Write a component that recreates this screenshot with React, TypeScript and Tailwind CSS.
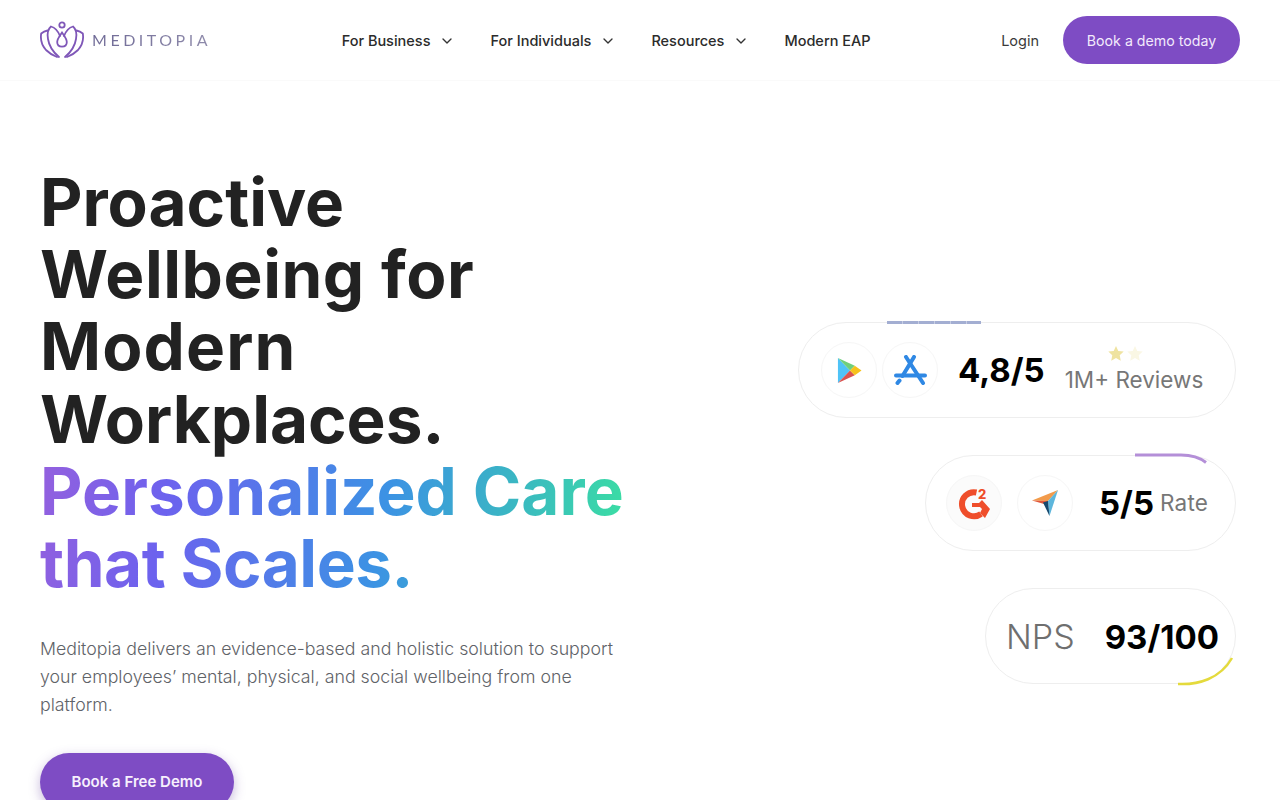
import { ChevronDown } from 'lucide-react';

const NAV_ITEMS = [
  { label: 'For Business', caret: true },
  { label: 'For Individuals', caret: true },
  { label: 'Resources', caret: true },
  { label: 'Modern EAP', caret: false },
];

function Logo() {
  return (
    <div className="flex items-center gap-[8px]">
      <svg width="44" height="38" viewBox="0 0 44 38" fill="none" stroke="#7f57b8" strokeWidth="1.8" strokeLinecap="round">
        <circle cx="22" cy="4" r="2.700" />
        <path d="M22 11.500c-2 3-4.800 6.200-4.800 9.500 0 3 2 4.700 4.800 4.700s4.800-1.700 4.800-4.700c0-3.300-2.800-6.500-4.800-9.500z" />
        <path d="M20 15C18 10 15 6.500 11 5.500 8 8 7 12.500 8 18c1 7 5 13 11 18" />
        <path d="M24 15c2-5 5-8.500 9-9.500 3 2.500 4 7 3 12.500-1 7-5 13-11 18" />
        <path d="M7.500 9.500C5 10 3 11 1.200 12.500c-1 6 .8 12 4.800 16.500 3 3 7 5.500 11 7" />
        <path d="M36.500 9.500c2.500.5 4.500 1.500 6.300 3 1 6-.8 12-4.800 16.500-3 3-7 5.500-11 7" />
      </svg>
      <span className="bg-gradient-to-r from-[#6f6a96] to-[#8f8bab] bg-clip-text font-['Lato',sans-serif] text-[16px] leading-none tracking-[0.22em] text-transparent">
        MEDITOPIA
      </span>
    </div>
  );
}

function Header() {
  return (
    <header className="flex h-[81px] items-center justify-between border-b border-[#fafafa] px-10">
      <Logo />
      <nav className="mt-[2px] flex items-center gap-[35px]">
        {NAV_ITEMS.map((item) => (
          <a key={item.label} className="flex items-center gap-[9px] text-[14.5px] font-medium text-[#2b2b2b]">
            {item.label}
            {item.caret && <ChevronDown size={16} strokeWidth={2} className="text-[#333333]" />}
          </a>
        ))}
      </nav>
      <div className="flex items-center gap-[24px]">
        <a className="mt-[2px] text-[14.5px] text-[#3a3a3a]">Login</a>
        <a className="flex h-12 w-[177px] items-center justify-center rounded-full bg-[#7e4cc4] pt-[2px] text-[14.2px] text-[#f3eafc]">
          Book a demo today
        </a>
      </div>
    </header>
  );
}

function IconCircle({ children, tinted }: { children: React.ReactNode; tinted?: boolean }) {
  return (
    <div className={`flex h-14 w-14 items-center justify-center rounded-full border border-[#f6f6f6] ${tinted ? 'bg-[#fbfbfb]' : 'bg-white'}`}>
      {children}
    </div>
  );
}

function GooglePlayIcon() {
  return (
    <svg width="25" height="27" viewBox="0 0 26 28">
      <path d="M1 1v26l12.500-13z" fill="#4fc3f7" />
      <path d="M1 1l12.500 13 5-5z" fill="#6fcf7c" />
      <path d="M1 27l12.500-13 5 5z" fill="#d9534f" />
      <path d="M18.500 9L13.500 14l5 5 7-5z" fill="#f6c21c" />
    </svg>
  );
}

function AppStoreIcon() {
  return (
    <svg width="33" height="30" viewBox="0 0 33 30" fill="none" stroke="#2f88e4" strokeWidth="4" strokeLinecap="round">
      <path d="M12 2l17 26" />
      <path d="M20 2L8.500 21" />
      <path d="M5.500 25.500L3.500 28" />
      <path d="M2 20.500h29" />
    </svg>
  );
}

function G2Icon() {
  return (
    <svg width="34" height="34" viewBox="0 -2 34 34">
      <path d="M19.500 4.500A12 12 0 1 0 24 26" fill="none" stroke="#ef4e2b" strokeWidth="6" />
      <path d="M15 15h7l3-3 8 9-5 9-5-5 2-4-2-2h-8z" fill="#ef4e2b" />
      <text x="21" y="11" fontSize="13" fontWeight="800" fill="#ef4e2b" fontFamily="Inter, sans-serif">2</text>
    </svg>
  );
}

function ArrowIcon() {
  return (
    <svg width="28" height="28" viewBox="0 0 28 28">
      <path d="M1 11.500L27 1l-10 11z" fill="#f29b4b" />
      <path d="M27 1L18.500 27 17 12z" fill="#5db6dc" />
      <path d="M1 11.500l16 .5-.5 4z" fill="#e0573b" />
      <path d="M12 13.500l5-1.500 1.500 15z" fill="#17496e" />
    </svg>
  );
}

function Star({ className }: { className: string }) {
  return (
    <svg width="16" height="15" viewBox="0 0 24 23" className={className}>
      <path d="M12 0l3.500 7.600 8.300 1-6.100 5.700 1.600 8.200L12 18.400 4.700 22.500l1.600-8.200L.2 8.600l8.300-1z" fill="currentColor" />
    </svg>
  );
}

function ReviewsPill() {
  return (
    <div className="relative flex h-24 w-[438px] items-center rounded-full border border-[#eeeeee] bg-white pl-[22px]">
      <div className="absolute left-[88px] top-[-2px] h-[3px] w-[94px] bg-[repeating-linear-gradient(90deg,#a3aed2_0_15px,#c6cde3_15px_16px)]" />
      <div className="flex gap-[5px]">
        <IconCircle>
          <span className="ml-[1px] flex"><GooglePlayIcon /></span>
        </IconCircle>
        <IconCircle>
          <AppStoreIcon />
        </IconCircle>
      </div>
      <span className="ml-5 text-[33px] font-bold leading-none text-black">4,8/5</span>
      <div className="ml-5 flex flex-col pt-[3px]">
        <div className="ml-[43px] flex h-[15px] gap-[3px]">
          <Star className="text-[#efe3a0]" />
          <Star className="text-[#faf7e4]" />
        </div>
        <span className="mt-[2px] text-[22.500px] leading-[34px] text-[#777777]">1M+ Reviews</span>
      </div>
    </div>
  );
}

function RatePill() {
  return (
    <div className="relative flex h-24 w-[311px] items-center rounded-full border border-[#eeeeee] bg-white pl-5">
      <svg className="absolute left-[207px] top-[-3px]" width="80" height="14" viewBox="0 0 80 14" fill="none">
        <path d="M2 2h46c10 0 18 2 25 7.500" stroke="#b48fd8" strokeWidth="3" />
      </svg>
      <IconCircle tinted>
        <G2Icon />
      </IconCircle>
      <div className="ml-[15px]">
        <IconCircle>
          <ArrowIcon />
        </IconCircle>
      </div>
      <span className="ml-[26px] text-[33px] font-bold leading-none text-black">5/5</span>
      <span className="ml-[6px] text-[22.500px] leading-none tracking-[0.01em] text-[#777777]">Rate</span>
    </div>
  );
}

function NpsPill() {
  return (
    <div className="relative flex h-24 w-[251px] items-center rounded-full border border-[#eeeeee] bg-white pl-5 pt-[2px]">
      <svg className="absolute left-[190px] top-[66px]" width="60" height="32" viewBox="0 0 60 32" fill="none">
        <path d="M2 29c20 1 42-5 54-26" stroke="#e4da3c" strokeWidth="2.500" />
      </svg>
      <span className="text-[34px] font-light leading-none text-[#6f6f6f]">NPS</span>
      <span className="ml-[30px] text-[33px] font-bold leading-none text-black">93/100</span>
    </div>
  );
}

export default function App() {
  return (
    <div className="h-[800px] overflow-hidden bg-white font-['Inter',sans-serif]">
      <Header />
      <main className="flex justify-between pl-10 pr-11 pt-[85px]">
        <div className="w-[600px]">
          <h1 className="w-[640px] text-[65.600px] font-bold leading-[72.200px] text-[#222222]">
            Proactive
            <br />
            <span className="tracking-[0.55px]">Wellbeing for</span>
            <br />
            <span className="tracking-[1.1px]">Modern</span>
            <br />
            Workplaces.
            <br />
            <span className="inline-block bg-[linear-gradient(100deg,#9460de_0%,#6c62ee_22%,#3c92e4_58%,#3ab5c4_78%,#3be2a0_100%)] bg-clip-text text-transparent">
              <span className="tracking-[0.1px]">Personalized Care</span>
              <br />
              <span className="tracking-[-0.45px]">that Scales.</span>
            </span>
          </h1>
          <p className="mt-9 w-[590px] text-[17.750px] font-light leading-7 text-[#5f6368]">
            Meditopia delivers an evidence-based and holistic solution to support your employees’ mental, physical, and social wellbeing from one platform.
          </p>
          <a className="mt-[34px] flex h-[58px] w-[194px] items-center justify-center rounded-full bg-[#7e4cc4] text-[15px] font-semibold text-[#f7f0fd] shadow-[0_4px_12px_rgba(90,50,150,0.35)]">
            Book a Free Demo
          </a>
        </div>
        <div className="flex flex-col items-end gap-[37px] pt-[156px]">
          <ReviewsPill />
          <RatePill />
          <NpsPill />
        </div>
      </main>
    </div>
  );
}
